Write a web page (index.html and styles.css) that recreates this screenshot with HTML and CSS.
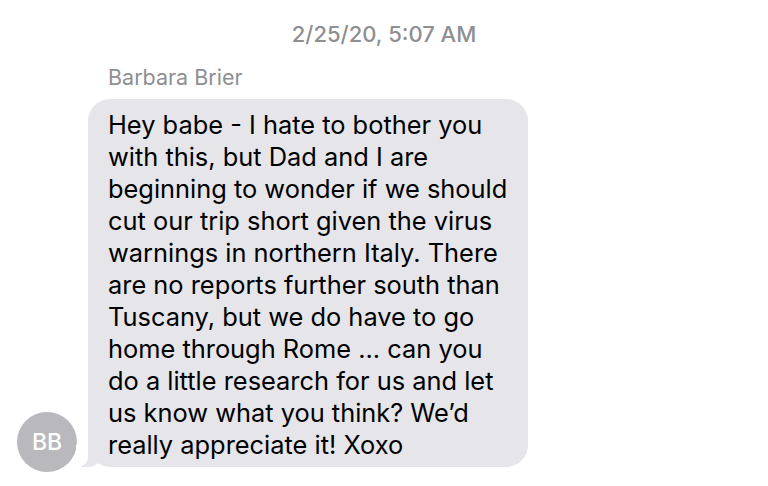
FILE: index.html
```html
<!DOCTYPE html>
<html>
<head>
<meta charset="utf-8">
<link rel="stylesheet" href="styles.css">
</head>
<body>
<div class="thread">
  <div class="timestamp">2/25/20, 5:07 AM</div>
  <div class="sender">Barbara Brier</div>
  <div class="row">
    <div class="avatar">BB</div>
    <div class="bubble">Hey babe - I hate to bother you<br>with this, but Dad and I are<br>beginning to wonder if we should<br>cut our trip short given the virus<br>warnings in northern Italy. There<br>are no reports further south than<br>Tuscany, but we do have to go<br>home through Rome ... can you<br>do a little research for us and let<br>us know what you think? We’d<br>really appreciate it! Xoxo</div>
  </div>
</div>
</body>
</html>
```

FILE: styles.css
```css
html, body {
  margin: 0;
  padding: 0;
  background: #ffffff;
}
body {
  width: 768px;
  height: 486px;
  overflow: hidden;
  font-family: Inter, "Liberation Sans", sans-serif;
}
.thread {
  display: flex;
  flex-direction: column;
  padding-top: 20px;
}
.timestamp {
  text-align: center;
  font-size: 22px;
  font-weight: 500;
  color: #8e8e93;
  line-height: 28px;
}
.sender {
  margin-top: 15px;
  padding-left: 108px;
  font-size: 21.5px;
  color: #8e8e93;
  line-height: 28px;
}
.row {
  margin-top: 8px;
  display: flex;
  align-items: flex-end;
  padding-left: 17px;
  gap: 11px;
}
.avatar {
  width: 60px;
  height: 60px;
  border-radius: 50%;
  background: #b9b9bd;
  color: #ffffff;
  font-size: 23px;
  font-weight: 500;
  display: flex;
  align-items: center;
  justify-content: center;
  margin-bottom: -5px;
  flex: none;
}
.bubble {
  position: relative;
  width: 440px;
  box-sizing: border-box;
  padding: 10px 0 6px 20px;
  background: #e5e5ea;
  border-radius: 22px;
  font-size: 25.4px;
  line-height: 32px;
  color: #000000;
  white-space: nowrap;
}
.bubble::before {
  content: "";
  position: absolute;
  left: -7px;
  bottom: 0;
  width: 22px;
  height: 22px;
  background: #e5e5ea;
  border-bottom-right-radius: 16px 14px;
}
.bubble::after {
  content: "";
  position: absolute;
  left: -12px;
  bottom: 0;
  width: 12px;
  height: 22px;
  background: #ffffff;
  border-bottom-right-radius: 10px;
}
```
